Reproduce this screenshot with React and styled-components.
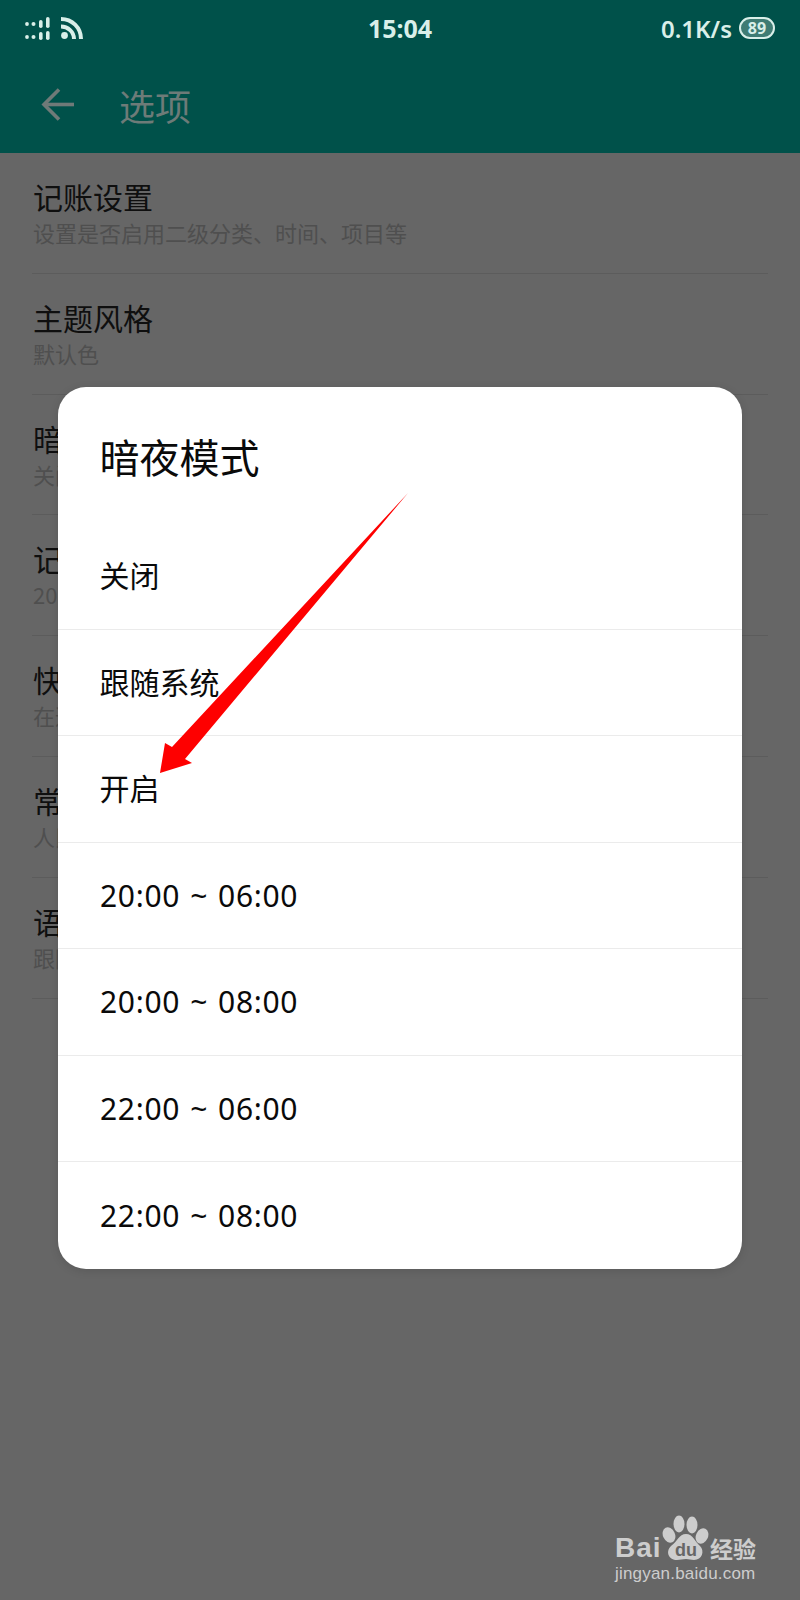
import React from "react";
import styled, { createGlobalStyle } from "styled-components";

const FONT = '"Noto Sans", "Noto Sans CJK SC", sans-serif';
const CJK = '"Noto Sans CJK SC", sans-serif';

const Global = createGlobalStyle`
  html, body {
    margin: 0;
    padding: 0;
    background: #666;
  }
  * { box-sizing: border-box; }
`;

const Screen = styled.div`
  position: relative;
  width: 800px;
  height: 1600px;
  overflow: hidden;
  background: #666;
  font-family: ${FONT};
`;

const Header = styled.header`
  height: 153px;
  background: #00514a;
`;

const StatusBar = styled.div`
  height: 56px;
  padding: 0 25px;
  display: grid;
  grid-template-columns: 1fr auto 1fr;
  align-items: center;
  color: #d9efe9;
  font-size: 24px;
  font-weight: 600;
`;

const StatusLeft = styled.div`
  display: flex;
  align-items: center;
  gap: 8px;
`;

const StatusRight = styled.div`
  display: flex;
  align-items: center;
  justify-content: flex-end;
  gap: 7px;
`;

const Clock = styled.span`
  font-size: 25px;
  font-weight: 700;
`;

const Battery = styled.span`
  width: 36px;
  height: 22px;
  border: 2.5px solid #d9efe9;
  border-radius: 11px;
  display: flex;
  align-items: center;
  justify-content: center;
  font-size: 16px;
  font-weight: 700;
  line-height: 1;
  background: #3f7c74;
`;

const TitleBar = styled.div`
  height: 97px;
  padding: 0 0 0 41px;
  display: flex;
  align-items: center;
  gap: 46px;
`;

const PageTitle = styled.h1`
  margin: 0 0 0 -1px;
  font-family: ${CJK};
  font-size: 36px;
  line-height: 1;
  font-weight: 400;
  color: #6d7b78;
`;

const List = styled.div`
  padding: 0 32px;
`;

const Row = styled.div`
  height: 120.8px;
  padding: 26px 1px 0;
  border-bottom: 1px solid #5c5c5c;
`;

const RowTitle = styled.div`
  font-family: ${CJK};
  font-size: 30px;
  line-height: 35px;
  color: #0f0f0f;
`;

const RowSub = styled.div`
  font-family: ${CJK};
  font-size: 22px;
  line-height: 36px;
  color: #4f4f4f;
`;

const Dialog = styled.div`
  position: absolute;
  left: 58px;
  top: 387px;
  width: 684px;
  height: 882px;
  background: #fff;
  border-radius: 28px;
  overflow: hidden;
  box-shadow: 0 2px 10px rgba(0, 0, 0, 0.12);
`;

const DialogTitle = styled.h2`
  margin: 0;
  height: 136px;
  padding: 42px 41.5px 0;
  font-family: ${CJK};
  font-size: 40px;
  line-height: 54px;
  font-weight: 400;
  color: #0a0a0a;
`;

const Option = styled.div`
  height: 106.5px;
  padding: ${(p) => (p.$digits ? "0 42px" : "0 41.5px 3px")};
  display: flex;
  align-items: center;
  font-size: 30px;
  color: #0a0a0a;
  letter-spacing: ${(p) => (p.$digits ? "0.7px" : "0")};
  word-spacing: ${(p) => (p.$digits ? "1.5px" : "0")};
  border-bottom: ${(p) => (p.$last ? "none" : "1px solid #ebebeb")};
`;

const Pointer = styled.svg`
  position: absolute;
  left: 150px;
  top: 485px;
`;

const Watermark = styled.div`
  position: absolute;
  left: 615px;
  top: 1510px;
  width: 150px;
  color: #cdcdcd;
`;

const MarkRow = styled.div`
  display: flex;
  align-items: flex-end;
  height: 54px;
`;

const MarkBai = styled.span`
  flex: none;
  width: 47px;
  font-family: "Liberation Sans", sans-serif;
  font-weight: 700;
  font-size: 28px;
  line-height: 32px;
  letter-spacing: 1px;
`;

const MarkJing = styled.span`
  flex: none;
  margin-left: 1px;
  font-family: ${CJK};
  font-weight: 700;
  font-size: 23px;
  line-height: 32px;
`;

const MarkUrl = styled.div`
  font-family: "Liberation Sans", sans-serif;
  font-size: 17px;
  line-height: 20px;
  letter-spacing: 0.2px;
  white-space: nowrap;
`;

const rows = [
  ["记账设置", "设置是否启用二级分类、时间、项目等"],
  ["主题风格", "默认色"],
  ["暗夜模式", "关闭"],
  ["记账提醒", "20:00"],
  ["快捷记账", "在通知栏显示快捷入口"],
  ["常用货币", "人民币"],
  ["语言设置", "跟随系统"],
];

const options = [
  "关闭",
  "跟随系统",
  "开启",
  "20:00 ~ 06:00",
  "20:00 ~ 08:00",
  "22:00 ~ 06:00",
  "22:00 ~ 08:00",
];

const Signal = () => (
  <svg width="27" height="26" viewBox="0 0 27 26" fill="#d9efe9">
    <circle cx="2" cy="9" r="1.9" />
    <circle cx="2" cy="22" r="1.9" />
    <circle cx="8.5" cy="9" r="2" />
    <circle cx="8.5" cy="22" r="2" />
    <rect x="14" y="5" width="3.6" height="8" rx="1.8" />
    <rect x="14" y="17" width="3.6" height="8" rx="1.8" />
    <rect x="21" y="2" width="3.6" height="11" rx="1.8" />
    <rect x="21" y="16" width="3.6" height="9" rx="1.8" />
  </svg>
);

const Wifi = () => (
  <svg width="23" height="24" viewBox="0 0 23 24" fill="none" stroke="#d9efe9" strokeWidth="4">
    <path d="M1 3C12 3 21 11.5 21 23" />
    <path d="M1 10.5C8 10.5 14 16 14 23" />
    <circle cx="4.5" cy="19.5" r="3.4" fill="#d9efe9" stroke="none" />
  </svg>
);

const BackArrow = () => (
  <svg width="33" height="33" viewBox="0 0 33 33" fill="none" stroke="#6f7a78" strokeWidth="3.6">
    <path d="M33 16.5H3" />
    <path d="M18 1.5L3 16.5l15 15" />
  </svg>
);

const Paw = () => (
  <svg width="47" height="54" viewBox="3 0 47 54" style={{ flex: "none" }}>
    <g fill="#cdcdcd">
      <ellipse cx="10" cy="25" rx="6" ry="8" transform="rotate(-25 10 25)" />
      <ellipse cx="20" cy="14" rx="5.5" ry="8.5" />
      <ellipse cx="33" cy="15" rx="5.5" ry="8.5" />
      <ellipse cx="43" cy="26" rx="6" ry="8" transform="rotate(25 43 26)" />
      <path d="M27 24c7 0 9 8 14 12 5 5 2 14-6 14-3 0-5-1-8-1s-6 1-9 1c-8 0-12-8-6-14 6-4 8-12 15-12z" />
    </g>
    <text x="27" y="46" textAnchor="middle" fontFamily="Liberation Sans" fontWeight="700" fontSize="18" fill="#666">du</text>
  </svg>
);

export default function App() {
  return (
    <Screen>
      <Global />
      <Header>
        <StatusBar>
          <StatusLeft>
            <Signal />
            <Wifi />
          </StatusLeft>
          <Clock>15:04</Clock>
          <StatusRight>
            <span>0.1K/s</span>
            <Battery>89</Battery>
          </StatusRight>
        </StatusBar>
        <TitleBar>
          <BackArrow />
          <PageTitle>选项</PageTitle>
        </TitleBar>
      </Header>
      <List>
        {rows.map(([title, sub]) => (
          <Row key={title}>
            <RowTitle>{title}</RowTitle>
            <RowSub>{sub}</RowSub>
          </Row>
        ))}
      </List>
      <Dialog>
        <DialogTitle>暗夜模式</DialogTitle>
        {options.map((label, i) => (
          <Option key={label} $digits={i > 2} $last={i === options.length - 1}>
            {label}
          </Option>
        ))}
      </Dialog>
      <Pointer width="270" height="300" viewBox="150 485 270 300">
        <polygon points="408,493 172,747 165,743 160,773 192,763 185,759" fill="#fe0000" />
      </Pointer>
      <Watermark>
        <MarkRow>
          <MarkBai>Bai</MarkBai>
          <Paw />
          <MarkJing>经验</MarkJing>
        </MarkRow>
        <MarkUrl>jingyan.baidu.com</MarkUrl>
      </Watermark>
    </Screen>
  );
}
